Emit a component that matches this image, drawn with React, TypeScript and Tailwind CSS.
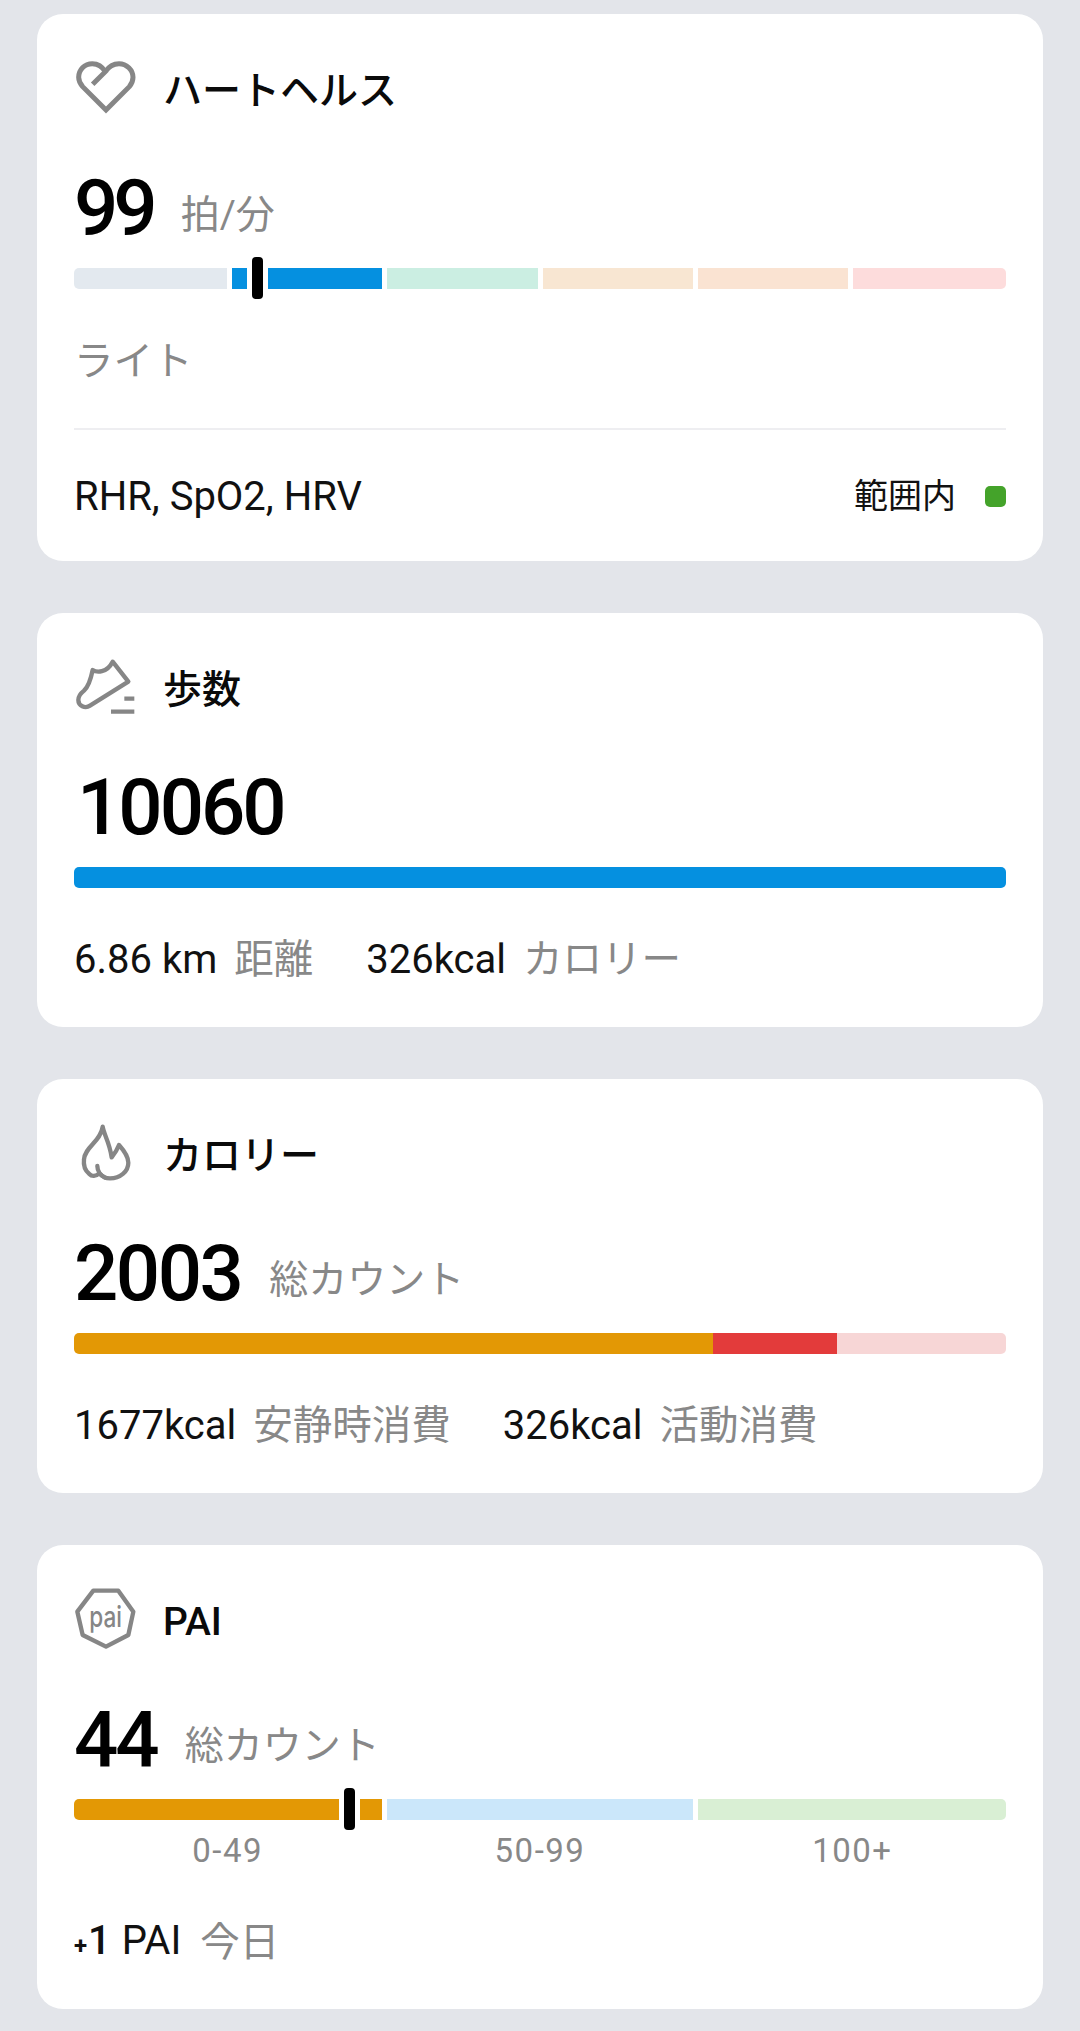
const jp = "font-['Roboto','Noto_Sans_CJK_JP',sans-serif]";

function Card({ height, children }: { height: string; children: React.ReactNode }) {
  return <div className={`rounded-[26px] bg-white px-[37px] pt-[45px] ${height}`}>{children}</div>;
}

function Header({ icon, title }: { icon: React.ReactNode; title: string }) {
  return (
    <div className="flex h-[60px] items-center gap-[29px]">
      {icon}
      <span className="pt-[4px] text-[39px] leading-[60px] font-medium text-[#0a0a0a]">{title}</span>
    </div>
  );
}

function Big({ value, unit, spacing = 'tracking-[-3px]' }: { value: string; unit?: string; spacing?: string }) {
  return (
    <div className="flex h-[149px] items-start gap-[28px] pt-[51px]">
      <span className={`text-[78px] leading-[78px] font-medium text-black ${spacing}`}>{value}</span>
      {unit && <span className="mt-[20px] text-[39px] leading-[50px] text-[#888]">{unit}</span>}
    </div>
  );
}

function Marker({ left }: { left: string }) {
  return (
    <div className={`absolute -top-[11px] h-[42px] w-[21px] bg-white px-[5px] ${left}`}>
      <div className="h-full rounded-[4px] bg-black" />
    </div>
  );
}

function Stat({ value, label }: { value: string; label: string }) {
  return (
    <span className="flex items-center gap-[17px]">
      <span className="text-[#111]">{value}</span>
      <span className="text-[39.5px] text-[#888]">{label}</span>
    </span>
  );
}

const iconClass = 'h-[60px] w-[60px] shrink-0 overflow-visible fill-none stroke-[#868686]';

export default function App() {
  return (
    <div className={`flex h-[2031px] w-[1080px] flex-col gap-[52px] overflow-hidden bg-[#e3e5ea] px-[37px] pt-[14px] ${jp}`}>
      <Card height="h-[547px]">
        <Header
          title="ハートヘルス"
          icon={
            <svg viewBox="42 117 180 180" className={iconClass} strokeWidth="15">
              <path d="M98 193 L136 155 C127 140 112 131 97 131 C73 131 56 150 56 172 C56 184 62 193 68 200 L138 270 L208 200 C214 193 219 184 219 172 C219 150 200 131 177 131 C160 131 146 140 136 155" />
            </svg>
          }
        />
        <Big value="99" unit="拍/分" spacing="tracking-[-5px]" />
        <div className="relative flex h-[21px] gap-[5px]">
          <div className="w-[153px] rounded-l-[5px] bg-[#e3e9ef]" />
          <div className="flex-1 bg-[#0590e0]" />
          <div className="flex-1 bg-[#cbeee2]" />
          <div className="flex-1 bg-[#f8e6d2]" />
          <div className="flex-1 bg-[#fae3d2]" />
          <div className="w-[153px] rounded-r-[5px] bg-[#fddcdc]" />
          <Marker left="left-[173px]" />
        </div>
        <div className="mt-[48px] h-[50px] text-[39.5px] leading-[50px] text-[#888]">ライト</div>
        <div className="mt-[41px] flex h-[133px] items-center justify-between border-t-[2px] border-[#eeeef1] pt-[2px] text-[#111]">
          <span className="text-[40px]">RHR, SpO2, HRV</span>
          <span className="flex items-center gap-[29px]">
            <span className="text-[34px]">範囲内</span>
            <span className="h-[21px] w-[21px] rounded-[5px] bg-[#44a32a]" />
          </span>
        </div>
      </Card>

      <Card height="h-[414px]">
        <Header
          title="歩数"
          icon={
            <svg viewBox="42 54 180 180" className={iconClass} strokeWidth="13">
              <path d="M158 65 L205 125 L90 197 C75 207 55 197 55 180 C55 170 62 160 72 152 C85 140 92 120 98 90 C110 98 140 100 158 65 Z" strokeLinejoin="round" />
              <path d="M193 176 H223 M153 215 H223" />
            </svg>
          }
        />
        <div className="pl-[3px]">
          <Big value="10060" />
        </div>
        <div className="h-[21px] rounded-[5px] bg-[#0590e0]" />
        <div className="mt-[47px] flex h-[50px] items-center gap-[53px] text-[40px] leading-[50px]">
          <Stat value="6.86 km" label="距離" />
          <Stat value="326kcal" label="カロリー" />
        </div>
      </Card>

      <Card height="h-[414px]">
        <Header
          title="カロリー"
          icon={
            <svg viewBox="42 42 180 180" className={iconClass} strokeWidth="13" strokeLinejoin="round" strokeLinecap="round">
              <path d="M128 50 C132 75 148 95 155 142 C165 130 172 118 177 105 C195 125 205 140 205 158 C205 185 180 205 150 205 C135 205 125 198 118 190 C108 200 95 200 88 192 C75 182 70 165 72 148 C75 110 122 95 128 50 Z" />
              <path d="M112 168 C112 180 120 195 135 203" />
            </svg>
          }
        />
        <Big value="2003" unit="総カウント" spacing="tracking-[-2.5px]" />
        <div className="flex h-[21px]">
          <div className="w-[639px] rounded-l-[5px] bg-[#e39805]" />
          <div className="w-[124px] bg-[#e33b3b]" />
          <div className="flex-1 rounded-r-[5px] bg-[#f7d6d6]" />
        </div>
        <div className="mt-[47px] flex h-[50px] items-center gap-[52px] text-[40px] leading-[50px]">
          <Stat value="1677kcal" label="安静時消費" />
          <Stat value="326kcal" label="活動消費" />
        </div>
      </Card>

      <Card height="h-[464px]">
        <Header
          title="PAI"
          icon={
            <svg viewBox="42 60 180 180" className={iconClass} strokeWidth="13" strokeLinejoin="round">
              <path d="M100 62 H175 L220 125 L205 195 L138 230 L68 195 L52 125 Z" />
              <text x="88" y="172" textLength="98" lengthAdjust="spacingAndGlyphs" fontSize="88" fontWeight="500" fill="#868686" stroke="none" fontFamily="Inter, sans-serif">pai</text>
            </svg>
          }
        />
        <Big value="44" unit="総カウント" />
        <div className="relative flex h-[21px] gap-[5px]">
          <div className="w-[308px] rounded-l-[5px] bg-[#e39805]" />
          <div className="flex-1 bg-[#cbe7fa]" />
          <div className="w-[308px] rounded-r-[5px] bg-[#d9efd4]" />
          <Marker left="left-[265px]" />
        </div>
        <div className="mt-[11px] flex h-[40px] gap-[5px] text-center text-[33px] leading-[40px] tracking-[1.5px] text-[#888]">
          <span className="flex-1">0-49</span>
          <span className="flex-1">50-99</span>
          <span className="flex-1">100+</span>
        </div>
        <div className="mt-[47px] flex h-[50px] items-center gap-[19px] text-[40px] leading-[50px]">
          <span className="flex items-baseline text-[#111]">
            <span className="text-[24px] font-bold">+</span>
            <span className="ml-[1px] font-medium">1</span>
            <span className="ml-[11px]">PAI</span>
          </span>
          <span className="text-[39.5px] text-[#888]">今日</span>
        </div>
      </Card>
    </div>
  );
}
